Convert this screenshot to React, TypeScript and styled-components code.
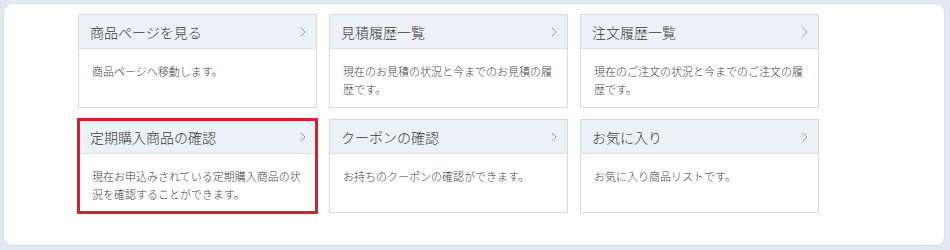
import React from "react";
import styled, { createGlobalStyle } from "styled-components";

const Global = createGlobalStyle`
  html, body { margin: 0; padding: 0; background: #e2e9f2; }
  body { font-family: "Noto Sans CJK JP", "Noto Sans", sans-serif; }
`;

const Page = styled.div`
  width: 950px;
  height: 250px;
  box-sizing: border-box;
  padding: 3px 5px 4px 3px;
  background: #e2e9f2;
`;

const Panel = styled.div`
  height: 100%;
  box-sizing: border-box;
  background: #ffffff;
  border: 1px solid #d6dfea;
  border-radius: 9px;
  padding: 10px 0 0 74px;
`;

const Grid = styled.div`
  display: grid;
  grid-template-columns: repeat(3, 239px);
  grid-auto-rows: 94px;
  column-gap: 12px;
  row-gap: 11px;
`;

const Card = styled.a<{ $active?: boolean }>`
  display: flex;
  flex-direction: column;
  box-sizing: border-box;
  border: 1px solid #d9dcdf;
  background: #fff;
  text-decoration: none;
  outline: ${(p) => (p.$active ? "3px solid #d1232a" : "none")};
  outline-offset: -2px;
`;

const Header = styled.div`
  display: flex;
  align-items: center;
  justify-content: space-between;
  height: 34px;
  box-sizing: border-box;
  padding: 0 10px 0 11px;
  background: #edf1f8;
  border-bottom: 1px solid #dde1e6;
`;

const Title = styled.span`
  font-size: 14px;
  font-weight: 300;
  color: #3a3a3a;
`;

const Chevron = styled.svg`
  width: 6px;
  height: 10px;
  flex: none;
`;

const Body = styled.p`
  margin: 0;
  padding: 13px 12px 0 13px;
  font-size: 11px;
  font-weight: 300;
  line-height: 18px;
  color: #444;
`;

const items = [
  { title: "商品ページを見る", text: "商品ページへ移動します。" },
  { title: "見積履歴一覧", text: "現在のお見積の状況と今までのお見積の履歴です。" },
  { title: "注文履歴一覧", text: "現在のご注文の状況と今までのご注文の履歴です。" },
  {
    title: "定期購入商品の確認",
    text: "現在お申込みされている定期購入商品の状況を確認することができます。",
    active: true,
  },
  { title: "クーポンの確認", text: "お持ちのクーポンの確認ができます。" },
  { title: "お気に入り", text: "お気に入り商品リストです。" },
];

export default function App() {
  return (
    <Page>
      <Global />
      <Panel>
        <Grid>
          {items.map((it) => (
            <Card key={it.title} $active={it.active} href="#">
              <Header>
                <Title>{it.title}</Title>
                <Chevron viewBox="0 0 6 10">
                  <path d="M0.8 0.8 L5 5 L0.8 9.2" fill="none" stroke="#9a9a9a" strokeWidth="1" />
                </Chevron>
              </Header>
              <Body>{it.text}</Body>
            </Card>
          ))}
        </Grid>
      </Panel>
    </Page>
  );
}
